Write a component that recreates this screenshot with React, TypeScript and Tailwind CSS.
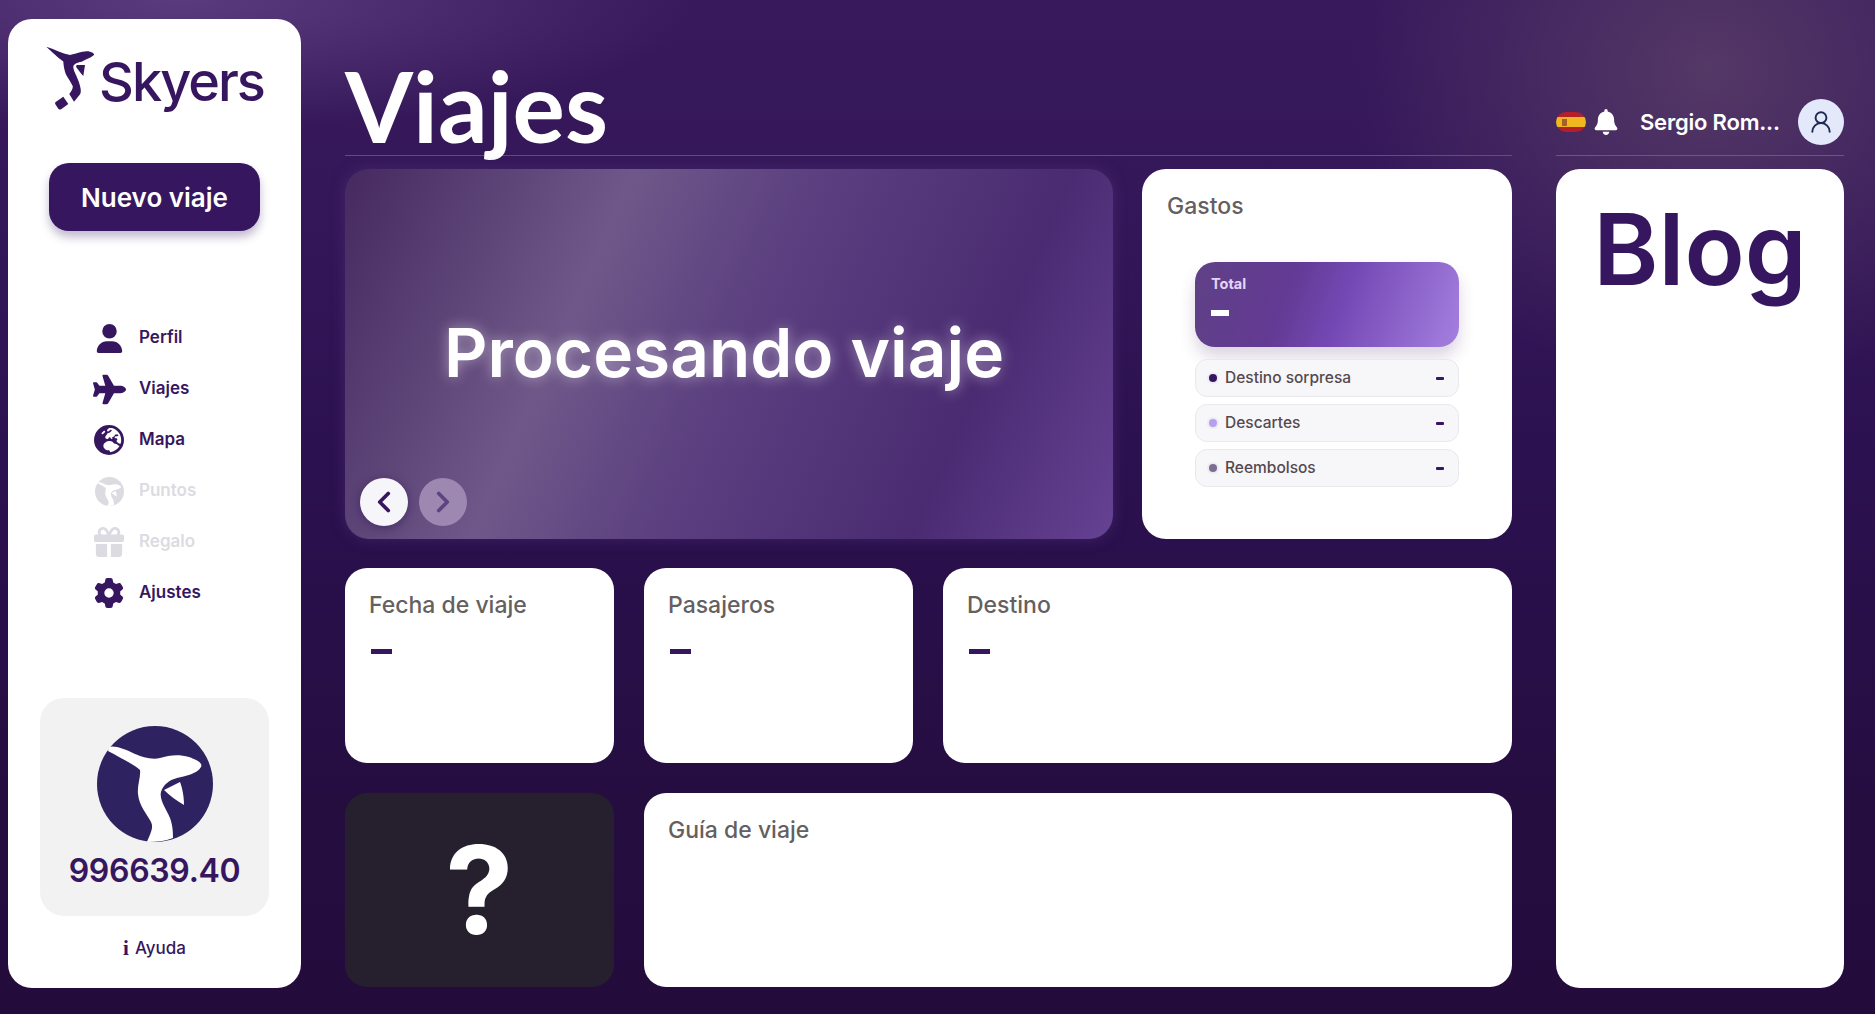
import React from "react";
import { FaUser, FaPlane, FaEarthEurope, FaGift, FaGear, FaBell } from "react-icons/fa6";
import { ChevronLeft, ChevronRight, UserRound } from "lucide-react";

const poppins = "[font-family:Inter,'Liberation_Sans',sans-serif]";

function PlaneMark({ className, fill = "#36175f" }: { className?: string; fill?: string }) {
  return (
    <svg viewBox="0 0 48 64" className={className} fill={fill}>
      <path d="M0.3 0.7 C8 3 16 7.5 24 9 C30 8 38 4 44 5.7 C47 6.5 48.5 8 48 9 C44 12.5 39 13.5 35.7 15.7 C31 16.5 27.5 18 27.3 20.7 C27 25 33 33 34.5 42 C35 45 35 47 33.5 49 L28 55.7 L23.3 48 C26 44.5 27 42 26.7 40 C24 34 20 30 19 25.7 C18 22 17.5 19 17.3 15.5 C11 11 5 5 0.3 0.7 Z" />
      <path d="M30.7 19 L39 19 L37.3 30 C34.5 27 32 23.5 30 20.7 Z" />
      <path d="M10 55.7 L17.3 50.7 L22.3 58 L15.5 63 C14 64 13 63.7 12.3 62.8 L9.5 58.5 C8.8 57.5 9 56.4 10 55.7 Z" />
    </svg>
  );
}

function PointsLogo({ className, bg, fg }: { className?: string; bg: string; fg: string }) {
  return (
    <svg viewBox="0 0 116 116" className={className}>
      <circle cx="58" cy="58" r="58" fill={bg} />
      <path fill={fg} d="M12 21 C17 19 28 23 38 28 C45 31 55 34 63 32 C72 29 82 28 92 31 C100 34 106 37 104 41 C100 48 88 50 80 52 C72 54 66 59 64 66 C62 74 70 84 73 92 C76 100 76 108 76 112 C68 115 60 116 50 116 C53 108 57 102 54 96 C50 88 42 80 41 68 C40 60 44 50 43 44 C38 39 22 31 11 25 Z" />
      <path fill={fg} d="M67 64 L83 56 C85 61 87 70 87 79 C80 75 73 70 67 64 Z" />
    </svg>
  );
}

function NavItem({ icon, label, muted }: { icon: React.ReactNode; label: string; muted?: boolean }) {
  return (
    <div className={`flex items-center h-[30px] ${muted ? "text-[#dcdbe2]" : "text-[#36175f]"}`}>
      <div className="w-[48px] flex justify-center -ml-[6px] mr-[6px]">{icon}</div>
      <span className={`text-[17px] font-semibold ${poppins}`}>{label}</span>
    </div>
  );
}

function ExpenseRow({ dot, label }: { dot: string; label: string }) {
  return (
    <div className="h-[38px] rounded-[12px] border border-[#e9e8ed] bg-[#f7f7f9] flex items-center pl-[11px] pr-[14px]">
      <span className="w-[12px] h-[12px] rounded-full flex items-center justify-center bg-[#ecebf1] mr-[6px]">
        <span className={`w-[8px] h-[8px] rounded-full ${dot}`} />
      </span>
      <span className={`flex-1 text-[15.5px] font-medium text-[#55494f] ${poppins}`}>{label}</span>
      <span className="w-[8px] h-[3px] bg-[#36175f] rounded-[1px]" />
    </div>
  );
}

function InfoCard({ title, className }: { title: string; className: string }) {
  return (
    <div className={`bg-white rounded-[22px] px-[24px] pt-[22px] ${className}`}>
      <h3 className={`text-[23px] leading-[30px] font-medium text-[#665f60] ${poppins}`}>{title}</h3>
      <div className="w-[21px] h-[5px] ml-[2px] bg-[#36175f] mt-[29px]" />
    </div>
  );
}

export default function App() {
  return (
    <div className="w-[1875px] h-[1014px] overflow-hidden relative flex pl-[8px] pt-[19px] bg-[radial-gradient(ellipse_360px_320px_at_1710px_70px,#543866_0%,rgba(84,56,102,0)_100%),radial-gradient(ellipse_520px_130px_at_180px_0px,#5a3c7e_0%,rgba(90,60,126,0)_100%),linear-gradient(180deg,#37195c_0%,#341759_20%,#2c1150_45%,#250d40_80%,#230c3c_100%)]">
      <aside className="w-[293px] h-[969px] bg-white rounded-[24px] flex flex-col items-center shrink-0">
        <div className="flex items-start h-[72px] mt-[27px] w-full pl-[38px] text-[#36175f]">
          <PlaneMark className="w-[48px] h-[64px] shrink-0" />
          <span className={`text-[54px] leading-[60px] font-medium tracking-[-2px] mt-[6px] ml-[5px] ${poppins}`}>Skyers</span>
        </div>
        <button className={`mt-[45px] w-[211px] h-[68px] rounded-[20px] bg-[#36175f] text-white text-[26px] font-semibold shadow-[0_6px_10px_rgba(54,23,95,0.3)] ${poppins}`}>
          Nuevo viaje
        </button>
        <nav className="mt-[92px] self-start ml-[83px] flex flex-col gap-[21px]">
          <NavItem icon={<FaUser size={29} />} label="Perfil" />
          <NavItem icon={<FaPlane size={33} />} label="Viajes" />
          <NavItem icon={<FaEarthEurope size={30} />} label="Mapa" />
          <NavItem icon={<PointsLogo className="w-[29px] h-[29px]" bg="#dcdbe2" fg="#ffffff" />} label="Puntos" muted />
          <NavItem icon={<FaGift size={30} />} label="Regalo" muted />
          <NavItem icon={<FaGear size={30} />} label="Ajustes" />
        </nav>
        <div className="mt-[90px] w-[229px] h-[218px] rounded-[24px] bg-[#f2f2f3] flex flex-col items-center pt-[28px]">
          <PointsLogo className="w-[116px] h-[116px]" bg="#2e2260" fg="#ffffff" />
          <span className="text-[32px] font-semibold leading-[40px] mt-[9px] text-[#36175f] [font-family:Inter,sans-serif] -tracking-[0.3px]">996639.40</span>
        </div>
        <div className={`mt-[20px] flex items-center gap-[6px] text-[17px] font-medium text-[#36175f] ${poppins}`}>
          <span className="font-bold [font-family:'Liberation_Serif',serif] text-[21px] leading-none">i</span>
          <span>Ayuda</span>
        </div>
      </aside>

      <main className="w-[1167px] ml-[44px] shrink-0 flex flex-col">
        <header className="h-[137px] border-b border-[#664a85] flex items-end">
          <h1 className="text-[98px] leading-[110px] font-bold text-white -mb-[5px] [font-family:Lato,sans-serif]">Viajes</h1>
        </header>
        <div className="flex gap-[29px] mt-[13px] h-[370px]">
          <section className="w-[768px] h-full rounded-[24px] relative flex items-center justify-center pr-[10px] pb-[2px] shadow-[0_0_14px_rgba(80,50,120,0.55)] bg-[linear-gradient(114deg,#45295f_0%,#6f5889_31%,#5c4080_50%,#4a2b72_78%,#664293_100%)]">
            <h2 className={`text-[67.5px] font-semibold text-white ${poppins} [text-shadow:0_0_14px_rgba(255,255,255,0.45)]`}>Procesando viaje</h2>
            <div className="absolute left-[15px] bottom-[13px] flex gap-[11px]">
              <button className="w-[48px] h-[48px] rounded-full bg-[#f6f5f9] flex items-center justify-center shadow-[0_2px_10px_rgba(40,15,80,0.5)]">
                <ChevronLeft size={34} strokeWidth={2.6} className="text-[#36175f]" />
              </button>
              <button className="w-[48px] h-[48px] rounded-full bg-[#9c88b1] flex items-center justify-center">
                <ChevronRight size={34} strokeWidth={2.6} className="text-[#5d4480]" />
              </button>
            </div>
          </section>
          <section className="w-[370px] h-full bg-white rounded-[24px] pt-[22px] flex flex-col">
            <h3 className={`text-[23px] leading-[30px] font-medium text-[#665f60] pl-[25px] ${poppins}`}>Gastos</h3>
            <div className="mx-[53px] mt-[41px] flex flex-col">
              <div className="h-[85px] rounded-[20px] pl-[16px] pt-[11px] bg-[linear-gradient(110deg,#5f4186_0%,#633a94_35%,#7448b4_55%,#a580e0_100%)] shadow-[0_10px_16px_rgba(54,23,95,0.18)]">
                <div className={`text-[14.5px] font-bold text-[#e3d5f5] ${poppins}`}>Total</div>
                <div className="w-[18px] h-[6px] bg-white mt-[15px]" />
              </div>
              <div className="mt-[12px] flex flex-col gap-[7px]">
                <ExpenseRow dot="bg-[#36175f]" label="Destino sorpresa" />
                <ExpenseRow dot="bg-[#b79ff0]" label="Descartes" />
                <ExpenseRow dot="bg-[#7e6d93]" label="Reembolsos" />
              </div>
            </div>
          </section>
        </div>
        <div className="flex gap-[30px] mt-[29px] h-[195px]">
          <InfoCard title="Fecha de viaje" className="w-[269px]" />
          <InfoCard title="Pasajeros" className="w-[269px]" />
          <InfoCard title="Destino" className="flex-1" />
        </div>
        <div className="flex gap-[30px] mt-[30px] h-[194px]">
          <div className="w-[269px] rounded-[22px] bg-[#261f2e] flex items-center justify-center">
            <span className={`text-[122px] leading-none font-bold text-white ${poppins}`}>?</span>
          </div>
          <div className="flex-1 bg-white rounded-[22px] px-[24px] pt-[22px]">
            <h3 className={`text-[23px] leading-[30px] font-medium text-[#665f60] ${poppins}`}>Guía de viaje</h3>
          </div>
        </div>
      </main>

      <div className="w-[288px] ml-[44px] shrink-0 flex flex-col">
        <header className="h-[137px] border-b border-[#71557f] flex items-center pt-[80px] pb-[10px]">
          <div className="w-[30px] h-[20px] rounded-[10px] overflow-hidden flex flex-col shrink-0">
            <div className="h-[5px] bg-[#b3202a]" />
            <div className="h-[10px] bg-[#f0b81e] pl-[6px] flex items-center"><span className="w-[5px] h-[7px] bg-[#a5602a] block" /></div>
            <div className="h-[5px] bg-[#b3202a]" />
          </div>
          <FaBell size={26} className="text-white ml-[7px] shrink-0" />
          <span className={`ml-[21px] text-[22px] font-semibold text-white -tracking-[0.2px] whitespace-nowrap ${poppins}`}>Sergio Rom...</span>
          <div className="ml-auto w-[46px] h-[46px] rounded-full bg-[#e3e9fb] flex items-center justify-center shrink-0">
            <UserRound size={26} strokeWidth={1.8} className="text-[#1f2a50]" />
          </div>
        </header>
        <section className="mt-[13px] h-[819px] bg-white rounded-[24px] flex justify-center">
          <h2 className={`text-[99px] leading-[120px] mt-[20px] font-semibold text-[#36175f] ${poppins}`}>Blog</h2>
        </section>
      </div>
    </div>
  );
}
